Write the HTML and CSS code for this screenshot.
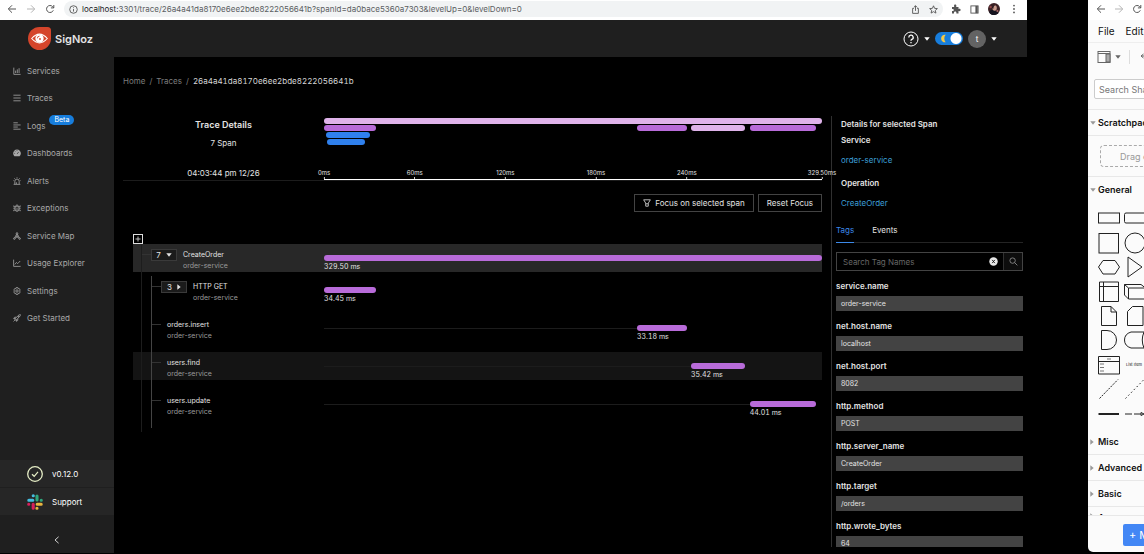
FILE: index.html
```html
<!DOCTYPE html>
<html lang="en">
<head>
<meta charset="utf-8">
<title>SigNoz</title>
<link rel="stylesheet" href="styles.css">
</head>
<body>
<svg class="defs" aria-hidden="true">
  <symbol id="i-back" viewBox="0 0 10 10"><path d="M9 5H1.5M5 1.3L1.3 5L5 8.7"/></symbol>
  <symbol id="i-fwd" viewBox="0 0 10 10"><path d="M1 5H8.5M5 1.3L8.7 5L5 8.7"/></symbol>
  <symbol id="i-reload" viewBox="0 0 10 10"><path d="M8.3 6.3A3.5 3.5 0 1 1 7.6 2.6L8.8 3.8M8.8 1V3.9H5.9"/></symbol>
  <symbol id="i-down" viewBox="0 0 6 4"><path d="M0.3 0.3H5.7L3 3.7Z"/></symbol>
  <symbol id="i-right" viewBox="0 0 4 6"><path d="M0.3 0.3V5.7L3.7 3Z"/></symbol>
</svg>
<div class="desktop">
  <section class="browser">
    <div class="chrome">
      <button class="ico" aria-label="Back"><svg class="line s10"><use href="#i-back"/></svg></button>
      <button class="ico dim" aria-label="Forward"><svg class="line s10"><use href="#i-fwd"/></svg></button>
      <button class="ico" aria-label="Reload"><svg class="line s10"><use href="#i-reload"/></svg></button>
      <div class="omnibox">
        <svg class="line s9" viewBox="0 0 10 10"><circle cx="5" cy="5" r="4.2"/><path d="M5 4.5V7.3M5 2.6V3.5"/></svg>
        <span class="url"><b>localhost:</b>3301/trace/26a4a41da8170e6ee2bde8222056641b?spanId=da0bace5360a7303&amp;levelUp=0&amp;levelDown=0</span>
        <button class="ico" aria-label="Share"><svg class="line s9" viewBox="0 0 10 10"><path d="M3.3 3.7H1.8V9.3H8.2V3.7H6.7M5 6.5V0.9M3.2 2.6L5 0.8L6.8 2.6"/></svg></button>
        <button class="ico" aria-label="Bookmark"><svg class="line s9" viewBox="0 0 10 10"><path d="M5 0.9L6.2 3.7L9.3 4L7 6L7.7 9L5 7.4L2.3 9L3 6L0.7 4L3.8 3.7Z"/></svg></button>
      </div>
      <button class="ico" aria-label="Extensions"><svg class="solid s10" viewBox="0 0 10 10"><path d="M1 3H3.2C2.7 1.2 3.4 0.6 4.2 0.6S5.7 1.2 5.2 3H7.5V5C9 4.6 9.6 5.2 9.6 6S9 7.4 7.5 7V9.4H5.4C5.6 8 5 7.5 4.2 7.5S2.8 8 3 9.4H1V7C2.3 7.2 2.8 6.6 2.8 6S2.3 4.8 1 5Z"/></svg></button>
      <button class="ico" aria-label="Side panel"><svg class="line s9" viewBox="0 0 10 10"><rect x="1" y="1" width="8" height="8"/><path d="M7.3 1V9" stroke-width="2.6"/></svg></button>
      <button class="ico" aria-label="Profile"><svg class="s12" viewBox="0 0 12 12"><circle cx="6" cy="6" r="6" fill="#3b2024"/><path d="M1 9Q3 6 6 7Q9 8 10.5 10A6 6 0 0 1 2.5 11Z" fill="#15141f"/><ellipse cx="6.6" cy="5" rx="2.2" ry="2.8" fill="#c99b8c"/><path d="M4 5Q4 1.5 7 2Q5.5 3 5.2 6Z" fill="#22141a"/><circle cx="2.6" cy="4" r="1.2" fill="#8f4347"/><circle cx="9.4" cy="8" r="1" fill="#a5686a"/></svg></button>
      <button class="ico" aria-label="Menu"><svg class="solid s10" viewBox="0 0 10 10"><circle cx="5" cy="1.6" r=".9"/><circle cx="5" cy="5" r=".9"/><circle cx="5" cy="8.4" r=".9"/></svg></button>
    </div>

    <header class="topbar">
      <a class="brand" href="#">
        <svg class="logo" viewBox="0 0 23 23"><path d="M11.5 0H19.5Q23 0 23 3.5V11.5A11.5 11.5 0 1 1 11.5 0Z" fill="#d5452b"/><path d="M3.7 11.5Q11.5 2.8 19.3 11.5Q11.5 20.2 3.7 11.5Z" fill="none" stroke="#fff" stroke-width="1.1"/><circle cx="11.5" cy="11.5" r="4.1" fill="#fff"/><path d="M9.4 11.3A2 2 0 0 1 11.5 9.2" fill="none" stroke="#d5452b" stroke-width=".9"/><circle cx="12" cy="12" r=".9" fill="#d5452b"/></svg>
        <span>SigNoz</span>
      </a>
      <div class="tools">
        <button class="ico" aria-label="Help"><svg class="line s16" viewBox="0 0 16 16"><circle cx="8" cy="8" r="7"/><path d="M5.8 6.4A2.2 2.2 0 1 1 8.8 8.4Q8 8.8 8 9.8M8 11V12.2" stroke-width="1.3"/></svg></button>
        <svg class="solid caret"><use href="#i-down"/></svg>
        <label class="switch"><input type="checkbox" checked aria-label="Dark mode"><svg class="moon" viewBox="0 0 8 10"><path d="M6.5 .8A4.3 4.3 0 1 0 6.500 9.200Q4.800 7.200 5 5Q4.800 2.800 6.500 .8Z" fill="#f6c945"/></svg></label>
        <button class="avatar">t</button>
        <svg class="solid caret"><use href="#i-down"/></svg>
      </div>
    </header>

    <div class="app">
      <nav class="sidebar">
        <ul class="menu">
          <li><a href="#"><svg class="line s8" viewBox="0 0 10 10"><path d="M1 .8V9.2H9.5M3.3 7.5V4.5M5.4 7.5V3M7.6 7.5V1.5"/></svg>Services</a></li>
          <li><a href="#"><svg class="line s8" viewBox="0 0 10 10"><path d="M.5 1.5H9.5M.5 5H9.5M.5 8.5H9.5"/></svg>Traces</a></li>
          <li><a href="#"><svg class="line s8" viewBox="0 0 10 10"><path d="M.5 1H6M.5 3.7H9.5M.5 6.3H6M.5 9H9.5"/></svg>Logs<span class="badge">Beta</span></a></li>
          <li><a href="#"><svg class="solid s8" viewBox="0 0 10 10"><path d="M1.8 9A4.8 4.8 0 1 1 8.2 9Z"/><path d="M5 6.3L7.2 3.6M5 1.5V2.6M1.6 5.5H2.6M2.6 2.9L3.3 3.6" stroke="#1f1f1f" stroke-width=".8"/></svg>Dashboards</a></li>
          <li><a href="#"><svg class="line s8" viewBox="0 0 10 10"><path d="M.8 9.2H9.2M2.3 9V5.3A2.7 2.7 0 0 1 7.7 5.3V9M5 .4V1.5M.6 4.5H1.4M8.6 4.5H9.4M1.5 1.6L2.3 2.3M8.5 1.6L7.7 2.3M4.2 8.8V6.6"/></svg>Alerts</a></li>
          <li><a href="#"><svg class="line s8" viewBox="0 0 10 10"><path d="M2.6 3.4H7.4V6.3A2.4 2.9 0 0 1 2.6 6.3ZM3.3 3.2A1.7 2 0 0 1 6.7 3.2M.4 5.3H2.6M7.4 5.3H9.6M1 1.8V3.4H2.6M9 1.8V3.4H7.4M1 9V7.5H2.8M9 9V7.5H7.2M5 5V9"/></svg>Exceptions</a></li>
          <li><a href="#"><svg class="line s8" viewBox="0 0 10 10"><circle cx="5" cy="1.8" r="1"/><circle cx="1.7" cy="8.2" r="1"/><circle cx="8.3" cy="8.2" r="1"/><circle cx="5" cy="6" r=".8"/><path d="M5 2.8V5.2M4.3 6.5L2.6 7.6M5.7 6.5L7.4 7.6M4.5 2.7L2.1 7.3M5.5 2.7L7.9 7.3"/></svg>Service Map</a></li>
          <li><a href="#"><svg class="line s8" viewBox="0 0 10 10"><path d="M.8 .8V9.2H9.5M2.3 6.8L4.3 4.3L5.8 5.8L9 2.5"/></svg>Usage Explorer</a></li>
          <li><a href="#"><svg class="line s8" viewBox="0 0 10 10"><path d="M4 .7H6L6.4 2.1L7.8 1.9L9 3.8L8.1 5L9 6.2L7.8 8.1L6.4 7.9L6 9.3H4L3.6 7.9L2.2 8.1L1 6.2L1.9 5L1 3.8L2.2 1.9L3.6 2.1Z"/><circle cx="5" cy="5" r="1.5"/></svg>Settings</a></li>
          <li><a href="#"><svg class="line s8" viewBox="0 0 10 10"><path d="M3 5.5L2 8L4.5 7L8.2 3.4Q9.4 2 9.2 .8Q8 .6 6.6 1.8ZM3.9 3.9L1.8 4.2L.8 5.7L3 5.5M6.1 6.1L5.8 8.2L4.3 9.2L4.5 7M.7 9.3L2 8"/><circle cx="6.8" cy="3.2" r=".7"/></svg>Get Started</a></li>
        </ul>
        <div class="side-foot">
          <button class="foot-row"><svg class="s16" viewBox="0 0 16 16"><circle cx="8" cy="8" r="7.3" fill="none" stroke="#e6eec6" stroke-width="1.3"/><path d="M5 8.2L7.2 10.3L11 5.9" fill="none" stroke="#e6eec6" stroke-width="1.2"/></svg>v0.12.0</button>
          <button class="foot-row"><svg class="s16" viewBox="0 0 16 16" stroke-width="3.1" stroke-linecap="round"><g stroke="#44bedf"><path d="M6.2 1.7H6.3M1.8 6.2H5.8"/></g><g stroke="#2fa67c"><path d="M10 2V6M14.3 6.2H14.2"/></g><g stroke="#e8b53f"><path d="M10.2 10.2H14.2M9.9 14.3H10"/></g><g stroke="#d81f5b"><path d="M6.2 10.2V14.2M1.7 10.2H1.8"/></g></svg>Support</button>
          <button class="collapse" aria-label="Collapse"><svg class="line s8" viewBox="0 0 10 10"><path d="M7 1L2.5 5L7 9"/></svg></button>
        </div>
      </nav>

      <main class="main">
        <nav class="crumbs"><a href="#">Home</a><i>/</i><a href="#">Traces</a><i>/</i><span>26a4a41da8170e6ee2bde8222056641b</span></nav>
        <div class="columns">
          <section class="trace">
            <div class="summary">
              <div class="facts">
                <h1>Trace Details</h1>
                <p>7 Span</p>
                <time>04:03:44 pm 12/26</time>
              </div>
              <div class="overview">
                <div class="flame">
                  <div class="lane"><span class="bar pale" style="left:0;width:100%"></span></div>
                  <div class="lane"><span class="bar" style="left:0;width:10.46%"></span><span class="bar" style="left:62.85%;width:10.07%"></span><span class="bar pale" style="left:73.7%;width:10.75%"></span><span class="bar" style="left:85.5%;width:13.36%"></span></div>
                  <div class="lane"><span class="bar blue" style="left:.4%;width:8.8%"></span></div>
                  <div class="lane"><span class="bar blue" style="left:.7%;width:7.6%"></span></div>
                </div>
                <div class="axis">
                  <span class="tick" style="left:0">0ms</span>
                  <span class="tick" style="left:18.21%">60ms</span>
                  <span class="tick" style="left:36.42%">120ms</span>
                  <span class="tick" style="left:54.63%">180ms</span>
                  <span class="tick" style="left:72.84%">240ms</span>
                  <span class="tick" style="left:100%">329.50ms</span>
                </div>
              </div>
            </div>
            <div class="actions">
              <button class="btn"><svg class="line s8" viewBox="0 0 10 10"><path d="M.8 1H9.2L6.6 5.2V9H3.4V5.2ZM3.4 6H6.6"/></svg>Focus on selected span</button>
              <button class="btn">Reset Focus</button>
            </div>
            <div class="tree">
              <button class="expand" aria-label="Expand all"><svg viewBox="0 0 8 8"><path d="M4 1.500V6.500M1.500 4H6.500"/></svg></button>
              <div class="row root selected">
                <div class="name"><button class="count">7<svg class="solid caret"><use href="#i-down"/></svg></button><p>CreateOrder<small>order-service</small></p></div>
                <div class="span"><span class="bar" style="left:0;width:100%"></span><span class="dur" style="left:0">329.50 ms</span></div>
              </div>
              <div class="kids">
                <div class="row">
                  <div class="name"><button class="count">3<svg class="solid caret-r"><use href="#i-right"/></svg></button><p>HTTP GET<small>order-service</small></p></div>
                  <div class="span"><span class="bar" style="left:0;width:10.46%"></span><span class="dur" style="left:0">34.45 ms</span></div>
                </div>
                <div class="row">
                  <div class="name"><p>orders.insert<small>order-service</small></p></div>
                  <div class="span"><span class="lead" style="width:62.85%"></span><span class="bar" style="left:62.85%;width:10.07%"></span><span class="dur" style="left:62.85%">33.18 ms</span></div>
                </div>
                <div class="row hover">
                  <div class="name"><p>users.find<small>order-service</small></p></div>
                  <div class="span"><span class="lead" style="width:73.7%"></span><span class="bar" style="left:73.7%;width:10.75%"></span><span class="dur" style="left:73.7%">35.42 ms</span></div>
                </div>
                <div class="row">
                  <div class="name"><p>users.update<small>order-service</small></p></div>
                  <div class="span"><span class="lead" style="width:85.5%"></span><span class="bar" style="left:85.5%;width:13.36%"></span><span class="dur" style="left:85.5%">44.01 ms</span></div>
                </div>
              </div>
            </div>
          </section>

          <aside class="details">
            <div class="selected-info">
              <h2>Details for selected Span</h2>
              <h3>Service</h3>
              <a href="#">order-service</a>
              <h3>Operation</h3>
              <a href="#">CreateOrder</a>
            </div>
            <div class="tabs" role="tablist"><button role="tab" class="on" aria-selected="true">Tags</button><button role="tab">Events</button></div>
            <div class="search">
              <input type="text" placeholder="Search Tag Names" aria-label="Search Tag Names">
              <button class="ico" aria-label="Clear"><svg class="s9" viewBox="0 0 10 10"><circle cx="5" cy="5" r="4.7" fill="#e8e8e8"/><path d="M3.5 3.2L6.5 6.8M6.5 3.2L3.5 6.8" stroke="#111"/></svg></button>
              <button class="go" aria-label="Search"><svg class="line s9" viewBox="0 0 10 10"><circle cx="4" cy="4" r="3"/><path d="M6.2 6.2L9.3 9.3"/></svg></button>
            </div>
            <dl class="tags">
              <dt>service.name</dt><dd>order-service</dd>
              <dt>net.host.name</dt><dd>localhost</dd>
              <dt>net.host.port</dt><dd>8082</dd>
              <dt>http.method</dt><dd>POST</dd>
              <dt>http.server_name</dt><dd>CreateOrder</dd>
              <dt>http.target</dt><dd>/orders</dd>
              <dt>http.wrote_bytes</dt><dd>64</dd>
            </dl>
          </aside>
        </div>
      </main>
    </div>
  </section>

  <section class="drawio">
    <div class="drawio-page">
      <div class="chrome">
        <button class="ico" aria-label="Back"><svg class="line s10"><use href="#i-back"/></svg></button>
        <button class="ico dim" aria-label="Forward"><svg class="line s10"><use href="#i-fwd"/></svg></button>
        <button class="ico" aria-label="Reload"><svg class="line s10"><use href="#i-reload"/></svg></button>
      </div>
      <div class="menubar"><button>File</button><button>Edit</button></div>
      <div class="toolbar">
        <button class="ico" aria-label="View"><svg class="s14" viewBox="0 0 14 14"><rect x="1" y="1.5" width="12" height="11" fill="none" stroke="#666"/><path d="M1 3.5H13" stroke="#666"/><rect x="9" y="4" width="4" height="8" fill="#aaa" stroke="#666"/></svg></button>
        <svg class="solid caret"><use href="#i-down"/></svg>
        <span class="sep"></span>
        <button class="ico" aria-label="Undo"><svg class="line s10" viewBox="0 0 10 10"><path d="M3 4L5.500 2M3 4L5.500 6M3 4H7Q9 4 9 7"/></svg></button>
      </div>
      <input class="find" type="text" placeholder="Search Shapes" aria-label="Search Shapes">
      <h4 class="first"><svg class="solid caret"><use href="#i-down"/></svg>Scratchpad</h4>
      <div class="scratch"><div>Drag elements here</div></div>
      <h4><svg class="solid caret"><use href="#i-down"/></svg>General</h4>
      <div class="shapes">
        <svg viewBox="0 0 24 24"><rect x="1.5" y="7" width="21" height="10"/></svg><svg viewBox="0 0 24 24"><rect x="1.5" y="7" width="21" height="10" rx="1.5"/></svg>
        <svg viewBox="0 0 24 24"><rect x="2" y="2.5" width="19.500" height="19.500"/></svg><svg viewBox="0 0 24 24"><circle cx="12" cy="12" r="10"/></svg>
        <svg viewBox="0 0 24 24"><path d="M1.500 12L6 5.500H18L22.500 12L18 19H6Z"/></svg><svg viewBox="0 0 24 24"><path d="M5 2V22L19 12Z"/></svg>
        <svg viewBox="0 0 24 24"><path d="M2.500 2H21.500V21.500H2.500ZM2.500 6.500H21.500M6.500 2V21.500"/></svg><svg viewBox="0 0 24 24"><path d="M1.500 4.500H18L22.500 8V19H5.500L1.500 15ZM1.500 4.500L5.500 8V19M5.500 8H22.500"/></svg>
        <svg viewBox="0 0 24 24"><path d="M4.500 2.500H14L19.500 8V21.500H4.500ZM14 2.500V8H19.500"/></svg><svg viewBox="0 0 24 24"><path d="M9.500 2.500H20V21.500H4.500V7.500Z"/></svg>
        <svg viewBox="0 0 24 24"><path d="M4.500 2.500H10A9.500 9.500 0 0 1 10 21.500H4.500Z"/></svg><svg viewBox="0 0 24 24"><path d="M8 4H21Q17.500 12 21 20H8Q1.500 18 1.500 12T8 4Z"/></svg>
        <svg viewBox="0 0 24 24"><path d="M1.500 3.500H22.500V21H1.500ZM1.500 8.500H22.500"/><path d="M10 6H14M3 11H7M3 14.500H7M3 18H7" stroke="#777"/></svg><small>List Item</small>
        <svg viewBox="0 0 24 24"><path d="M2.500 21.500L21 2.500" stroke-dasharray="2 1.200"/></svg><svg viewBox="0 0 24 24"><path d="M2.500 21.500L21 2.500" stroke-dasharray="1.500 2.500"/></svg>
        <svg viewBox="0 0 24 24"><path d="M1.500 12H22" stroke-width="2"/></svg><svg viewBox="0 0 24 24"><path d="M2 12H9M11 12H18M18 10.500L21 12L18 13.500Z"/></svg>
      </div>
      <h4><svg class="solid caret-r"><use href="#i-right"/></svg>Misc</h4>
      <h4><svg class="solid caret-r"><use href="#i-right"/></svg>Advanced</h4>
      <h4><svg class="solid caret-r"><use href="#i-right"/></svg>Basic</h4>
      <h4 class="cut"><svg class="solid caret-r"><use href="#i-right"/></svg>Arrows</h4>
      <div class="more"><button>+ More Shapes</button></div>
    </div>
  </section>
</div>
</body>
</html>
```
FILE: styles.css
```css
* { box-sizing: border-box; }
html, body { height: 100%; }
body { margin: 0; background: #000; color: #e3e3e3; font: 8px/10px Inter, "Liberation Sans", sans-serif; }
h1, h2, h3, h4, p, ul, dl, dd { margin: 0; padding: 0; }
button { border: 0; padding: 0; background: none; color: inherit; font: inherit; cursor: pointer; }
input { font: inherit; color: inherit; }
a { color: inherit; text-decoration: none; }
svg { display: block; flex: none; }
.defs { position: absolute; width: 0; height: 0; }
.line { fill: none; stroke: currentColor; stroke-width: 1; }
.solid { fill: currentColor; }
.s8 { width: 8px; height: 8px; }
.s9 { width: 9px; height: 9px; }
.s10 { width: 10px; height: 10px; }
.s12 { width: 12px; height: 12px; }
.s14 { width: 14px; height: 14px; }
.s16 { width: 16px; height: 16px; }
.caret { width: 6px; height: 4px; }
.caret-r { width: 4px; height: 6px; }
.ico { display: flex; }

.desktop { display: flex; justify-content: space-between; gap: 61px; height: 100vh; }
.browser { flex: 1; min-width: 0; display: flex; flex-direction: column; padding-bottom: 1px; }

/* browser toolbar */
.chrome { display: flex; align-items: center; gap: 9px; flex: none; height: 20px; padding: 0 8px 2px 7px; background: #fff; color: #555; }
.chrome .dim { color: #b5b5b5; }
.omnibox { flex: 1; display: flex; align-items: center; gap: 9px; height: 16px; padding: 0 5px; border-radius: 8px; background: #f1f3f4; }
.omnibox + .ico { margin-left: -1px; }
.url { flex: 1; margin-left: -5px; line-height: 12px; white-space: nowrap; color: #5b5e62; }
.url b { font-weight: 400; color: #202124; }

/* application header */
.topbar { display: flex; align-items: center; justify-content: space-between; flex: none; height: 37px; padding: 0 30px 0 28px; background: #1f1f1f; color: #fff; }
.brand { display: flex; align-items: center; gap: 4px; font-size: 11px; font-weight: 600; color: #e3e3e3; }
.logo { width: 23px; height: 23px; }
.tools { display: flex; align-items: center; gap: 5px; }
.switch { display: flex; position: relative; }
.switch input { appearance: none; margin: 0; width: 28px; height: 13px; border-radius: 7px; background: radial-gradient(circle at 21px 50%, #fff 5px, #177ddc 6px); }
.moon { position: absolute; left: 5px; top: 2px; width: 7px; height: 9px; }
.avatar { width: 18px; height: 18px; border-radius: 50%; background: #636363; }

.app { flex: 1; min-height: 0; display: flex; }

/* side navigation */
.sidebar { flex: none; width: 114px; display: flex; flex-direction: column; justify-content: space-between; background: #1f1f1f; color: #a8a8a8; }
.menu { display: grid; grid-auto-rows: 1fr; height: 275px; list-style: none; }
.menu a { display: flex; align-items: center; gap: 6px; height: 100%; padding-left: 13px; }
.badge { align-self: flex-start; margin-top: 3px; margin-left: -2px; padding: 0 5px; border-radius: 5px; background: #177ddc; color: #fff; font-size: 7px; }
.side-foot { color: #fff; }
.foot-row { display: flex; align-items: center; gap: 9px; width: 100%; height: 28px; padding-left: 27px; background: #262626; border-bottom: 1px solid #1f1f1f; }
.collapse { display: flex; align-items: center; justify-content: center; width: 100%; height: 37px; padding-top: 10px; }

/* trace page */
.main { flex: 1; min-width: 0; display: flex; flex-direction: column; padding: 18px 4px 6px 9px; }
.crumbs { display: flex; gap: 4px; height: 12px; line-height: 12px; color: #7d7d7d; }
.crumbs i { font-style: normal; }
.crumbs span { color: #d6d6d6; font-variant-numeric: tabular-nums; }
.columns { flex: 1; min-height: 0; display: flex; gap: 9px; margin-top: 29px; }
.trace { flex: 1; min-width: 0; }
.summary { display: flex; height: 65px; border-bottom: 1px solid #1c1c1c; }
.facts { width: 201px; display: flex; flex-direction: column; align-items: center; padding-top: 4px; }
.facts h1 { font-size: 9px; line-height: 10px; font-weight: 600; }
.facts p { margin-top: 8px; }
.facts time { margin-top: auto; margin-bottom: 2px; }
.overview { flex: 1; display: flex; flex-direction: column; justify-content: space-between; padding-top: 2px; }
.flame { display: flex; flex-direction: column; gap: 1px; }
.lane { position: relative; height: 6px; }
.bar { position: absolute; height: 6px; border-radius: 3px; background: #b86bd9; }
.bar.pale { background: #dfb3ea; }
.bar.blue { background: #2f80ed; }
.axis { position: relative; height: 12px; border-bottom: 1px solid #fff; }
.tick { position: absolute; bottom: 0; transform: translateX(-50%); padding-bottom: 2px; font-size: 6px; line-height: 8px; background: linear-gradient(#ccc, #ccc) bottom / 1px 2px no-repeat; }
.actions { display: flex; justify-content: flex-end; gap: 4px; margin-top: 13px; }
.btn { display: flex; align-items: center; gap: 4px; height: 18px; padding: 0 8px; border: 1px solid #434343; }

.tree { position: relative; margin-top: 22px; padding-left: 10px; }
.tree::after { content: ""; position: absolute; left: 18px; top: 10px; bottom: -14px; width: 1px; background: #1d1d1d; }
.expand { display: block; width: 10px; height: 10px; border: 1px solid #ddd; }
.expand svg { width: 8px; height: 8px; fill: none; stroke: #bbb; }
.row { display: flex; height: 28px; }
.selected { background: #282828; }
.hover { background: #141414; }
.name { position: relative; width: 191px; display: flex; gap: 6px; padding: 5px 0 0 28px; }
.name::before { content: ""; position: absolute; left: 18px; top: 10px; width: 10px; height: 1px; background: #333; }
.root .name { padding-left: 18px; }
.root .name::before { left: 8px; }
.name p { font-size: 7px; line-height: 11px; }
.name p:first-child { margin-left: 6px; }
.name small { display: block; font-size: 7px; color: #9b9b9b; }
.count { display: flex; align-items: center; justify-content: center; gap: 5px; width: 26px; height: 12px; border: 1px solid #3a3a3a; background: #1b1b1b; position: relative; z-index: 1; }
.kids { position: relative; display: flex; flex-direction: column; gap: 10px; margin-top: 4px; }
.kids::after { content: ""; position: absolute; left: 18px; top: 0; bottom: -10px; width: 1px; background: #444; }
.span { position: relative; flex: 1; }
.span .bar { top: 11px; }
.lead { position: absolute; left: 0; top: 14px; height: 1px; background: #1c1c1c; }
.dur { position: absolute; top: 18px; font-size: 7px; line-height: 9px; font-variant-numeric: tabular-nums; }

/* selected span details */
.details { flex: none; width: 192px; overflow: hidden; border-left: 1px solid #303030; padding-left: 4px; }
.selected-info { display: flex; flex-direction: column; padding: 3px 0 0 5px; }
.selected-info h2, .selected-info h3 { font-size: 8px; line-height: 10px; font-weight: 600; }
.selected-info h2 { margin-bottom: 6px; }
.selected-info a { margin: 10px 0 13px; color: #3c9fd6; }
.tabs { display: flex; gap: 18px; height: 22px; border-bottom: 1px solid #242424; }
.tabs button { padding-bottom: 3px; }
.tabs .on { color: #3c89e8; border-bottom: 1px solid #3c89e8; margin-bottom: -1px; }
.search { display: flex; align-items: center; height: 19px; margin-top: 9px; border: 1px solid #434343; }
.search input { flex: 1; min-width: 0; padding: 0 6px; border: 0; outline: 0; background: none; }
.search input::placeholder { color: #666; }
.go { display: flex; align-items: center; justify-content: center; width: 19px; height: 100%; margin-left: 5px; border-left: 1px solid #303030; background: #0d0d0d; color: #888; }
.tags dt { margin-top: 10px; font-weight: 600; line-height: 10px; }
.tags dd { margin-top: 5px; height: 15px; padding-left: 5px; background: #434343; font-size: 7px; line-height: 15px; }

/* diagram editor window */
.drawio { flex: none; width: 56px; overflow: hidden; margin-bottom: 2px; border-radius: 0 0 0 5px; background: #fbfbfb; color: #111; }
.drawio-page { width: 200px; height: 100%; display: flex; flex-direction: column; }
.drawio .chrome { gap: 8px; padding-left: 8px; }
.menubar { display: flex; gap: 11px; flex: none; height: 23px; padding-left: 10px; border-bottom: 1px solid #eee; font-size: 10px; }
.toolbar { display: flex; align-items: center; gap: 4px; flex: none; height: 27px; padding-left: 9px; color: #666; }
.sep { width: 1px; height: 14px; margin: 0 4px; background: #ddd; }
.find { flex: none; height: 20px; margin: 9px 8px 10px 6px; padding: 0 4px; border: 1px solid #ccc; border-radius: 2px; background: #fff; font-size: 9px; }
.find::placeholder { color: #777; }
.drawio h4 { display: flex; align-items: center; flex: none; height: 26px; padding-left: 2px; gap: 2px; border-bottom: 1px solid #e8e8e8; font-size: 9px; font-weight: 600; }
.drawio h4.first { height: 27px; border-top: 1px solid #e8e8e8; }
.drawio h4 .solid { color: #999; }
.drawio h4 .caret-r { margin-right: 2px; }
.scratch { flex: none; padding: 9px 12px; border-bottom: 1px solid #e8e8e8; }
.scratch div { height: 22px; padding-left: 19px; border: 1px dashed #aaa; border-radius: 4px; color: #999; font-size: 9px; line-height: 21px; }
.scratch + h4 { border: 0; height: 25px; }
.shapes { flex: none; display: grid; grid-template-columns: 24px 24px; column-gap: 2px; grid-auto-rows: 1fr; align-items: center; height: 220px; margin: 4px 0 3px 9px; }
.shapes svg { width: 24px; height: 24px; fill: none; stroke: #222; stroke-width: 1; }
.shapes small { font-size: 4px; line-height: 5px; padding-left: 3px; }
.drawio h4.cut { flex: 1 1 0; min-height: 0; height: auto; max-height: 9px; overflow: hidden; align-items: flex-start; padding-top: 6px; }
.more { flex: none; margin-top: auto; padding: 8px 0 6px 35px; }
.more button { width: 120px; height: 22px; padding-left: 6px; border-radius: 2px; background: #4387f5; color: #fff; font-size: 11px; text-align: left; }
```
